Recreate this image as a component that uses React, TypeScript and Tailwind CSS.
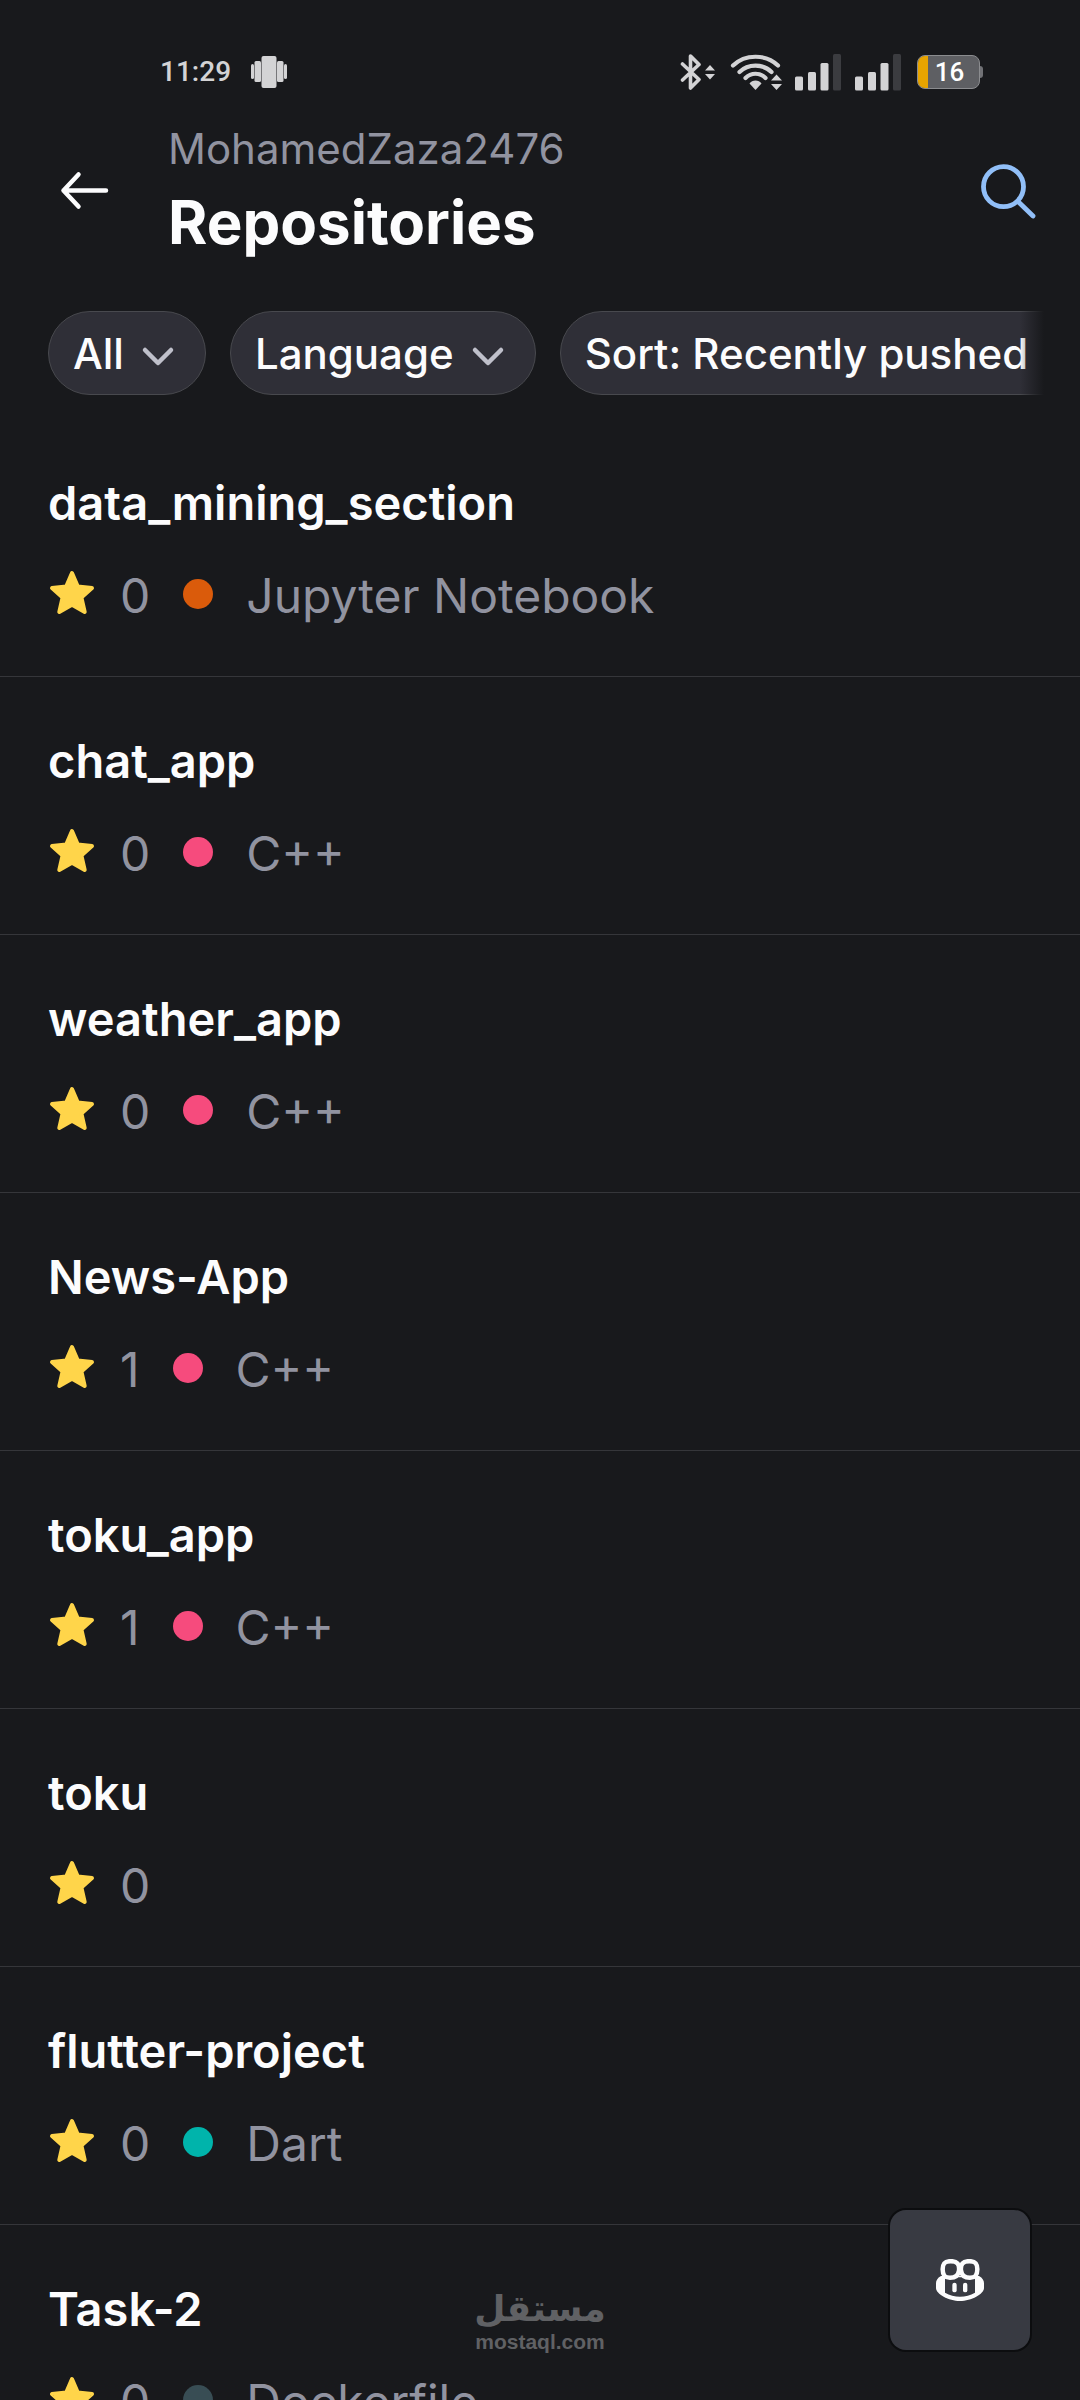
import React from 'react';

interface Repository {
    name: string;
    stars: number;
    language?: string;
    color?: string;
}

const repositories: Repository[] = [
    { name: 'data_mining_section', stars: 0, language: 'Jupyter Notebook', color: 'bg-[#da5b0b]' },
    { name: 'chat_app', stars: 0, language: 'C++', color: 'bg-[#f64b7d]' },
    { name: 'weather_app', stars: 0, language: 'C++', color: 'bg-[#f64b7d]' },
    { name: 'News-App', stars: 1, language: 'C++', color: 'bg-[#f64b7d]' },
    { name: 'toku_app', stars: 1, language: 'C++', color: 'bg-[#f64b7d]' },
    { name: 'toku', stars: 0 },
    { name: 'flutter-project', stars: 0, language: 'Dart', color: 'bg-[#00b4ab]' },
    { name: 'Task-2', stars: 0, language: 'Dockerfile', color: 'bg-[#384d54]' },
];

export default function App() {
    return (
        <div className="relative flex h-screen flex-col overflow-hidden bg-[#18191c] font-['Inter',sans-serif] text-[#fcfcfd]">
            <StatusBar />
            <Header owner="MohamedZaza2476" title="Repositories" />
            <Filters />
            <main className="min-h-0 flex-1 overflow-hidden">
                <ul>
                    {repositories.map((repository) => (
                        <RepositoryRow key={repository.name} repository={repository} />
                    ))}
                </ul>
            </main>
            <Watermark />
            <button
                type="button"
                aria-label="Copilot"
                className="absolute right-[50px] bottom-[50px] flex size-[140px] items-center justify-center rounded-2xl bg-[#383a42] shadow-[0_0_0_2px_#0c0d0f]"
            >
                <CopilotIcon />
            </button>
        </div>
    );
}

/**
 * The system bar with the clock, the connections and the battery
 */
function StatusBar() {
    return (
        <div className="flex h-[124px] shrink-0 items-center justify-between pt-5 pr-[97px] pl-40 text-[#d3d3d5]">
            <div className="flex items-center gap-5">
                <span className="font-['Roboto',sans-serif] text-[28px] leading-10 font-medium">11:29</span>
                <VibrateIcon />
            </div>
            <div className="flex items-center">
                <BluetoothIcon />
                <WifiIcon />
                <SignalIcon />
                <SignalIcon />
                <Battery level="16" />
            </div>
        </div>
    );
}

function Header(props: { owner: string; title: string }) {
    const { owner, title } = props;
    return (
        <header className="flex shrink-0 items-center pr-10 pl-[52px]">
            <a href="#back" aria-label="Back" className="mr-[52px] shrink-0">
                <svg viewBox="0 0 64 64" className="size-16" fill="none" stroke="currentColor" strokeWidth="4.5" strokeLinecap="round" strokeLinejoin="round">
                    <path d="M54 31.500H11.500M26.500 15.500L11.500 31.500L26.500 47.500" />
                </svg>
            </a>
            <div className="flex min-w-0 flex-1 flex-col gap-3">
                <p className="truncate text-[42px] leading-[50px] text-[#9193a0]">{owner}</p>
                <h1 className="truncate text-6xl leading-[72px] font-bold">{title}</h1>
            </div>
            <button type="button" aria-label="Search" className="shrink-0 text-[#91bff8]">
                <svg viewBox="0 0 64 64" className="size-16" fill="none" stroke="currentColor" strokeWidth="4.800" strokeLinecap="round">
                    <circle cx="27.500" cy="27.700" r="20" />
                    <path d="M42 42.500L57 57" />
                </svg>
            </button>
        </header>
    );
}

function Filters() {
    return (
        <nav aria-label="Filters" className="relative mt-[53px] mr-9 shrink-0 overflow-hidden pb-6 pl-12">
            <div className="flex gap-6">
                <FilterChip label="All" />
                <FilterChip label="Language" />
                <FilterChip label="Sort: Recently pushed" />
            </div>
            {/* Fades out the chips that run past the edge */}
            <div className="absolute inset-y-0 right-0 w-6 bg-linear-to-r from-transparent to-[#18191c]" />
        </nav>
    );
}

function FilterChip(props: { label: string }) {
    return (
        <button
            type="button"
            className="flex h-[84px] shrink-0 items-center gap-[6px] rounded-full border border-[#48494e] bg-[#2f2f37] pt-0.5 pr-[19px] pl-6 text-[42px] leading-[50px] font-medium"
        >
            {props.label}
            <svg viewBox="0 0 56 56" className="size-14 text-[#bfc0ca]" fill="none" stroke="currentColor" strokeWidth="4.500" strokeLinecap="round" strokeLinejoin="round">
                <path d="M15 24L28 37L41 24" />
            </svg>
        </button>
    );
}

function RepositoryRow(props: { repository: Repository }) {
    const { name, stars, language, color } = props.repository;
    return (
        <li className="h-[258px] border-b border-[#35363a] px-12 pt-[55px]">
            <a href={`#${name}`} className="flex flex-col gap-[34px]">
                <h2 className="text-[47px] leading-[58px] font-semibold">{name}</h2>
                <div className="flex items-start text-5xl leading-[60px] text-[#9193a0]">
                    <StarIcon />
                    <span className="ml-6">{stars}</span>
                    {language ? (
                        <>
                            <span className={`mt-[13px] ml-[33px] size-[30px] rounded-full ${color}`} />
                            <span className="ml-[33px]">{language}</span>
                        </>
                    ) : null}
                </div>
            </a>
        </li>
    );
}

function StarIcon() {
    return (
        <svg viewBox="0 0 48 48" className="mt-1 size-12 text-[#ffd54a]" fill="currentColor" stroke="currentColor" strokeWidth="4" strokeLinejoin="round">
            <path d="M24 3L29.700 16.400L44 18L33.400 27.400L36.700 42L24 34.700L11.300 42L14.600 27.400L4 18L18.300 16.400Z" />
        </svg>
    );
}

function CopilotIcon() {
    return (
        <svg viewBox="198 207 144 126" className="h-[42px] w-12" fill="currentColor">
            <path
                fillRule="evenodd"
                d="M213 258C202 264 198 272 198 280V294C198 312 236 333 270 333C304 333 342 312 342 294V280C342 272 338 264 327 258ZM225 262V308Q246 320 270 320Q294 320 315 308V262Z"
            />
            <g fill="#383a42" stroke="currentColor" strokeWidth="13.500">
                <path d="M242 213.500C225 213.500 218 219 218 238C218 257 225 263.500 240 263.500C256 263.500 265 256 267 242C269 222 262 213.500 242 213.500Z" />
                <path d="M298 213.500C315 213.500 322 219 322 238C322 257 315 263.500 300 263.500C284 263.500 275 256 273 242C271 222 278 213.500 298 213.500Z" />
            </g>
            <rect x="247" y="278" width="13" height="29" rx="6.500" />
            <rect x="279" y="278" width="13" height="29" rx="6.500" />
        </svg>
    );
}

function VibrateIcon() {
    return (
        <svg viewBox="0 0 36 32" className="h-8 w-9" fill="currentColor">
            <rect x="0" y="8" width="3" height="15" rx="1.500" />
            <rect x="33" y="8" width="3" height="15" rx="1.500" />
            <rect x="3.500" y="5" width="6.500" height="21" rx="1.500" />
            <rect x="26" y="5" width="6.500" height="21" rx="1.500" />
            <rect x="10.500" y="0" width="15" height="32" rx="2" />
        </svg>
    );
}

function BluetoothIcon() {
    return (
        <svg viewBox="0 0 36 38" className="mr-[14px] h-[38px] w-9" fill="none" stroke="currentColor" strokeWidth="3.600" strokeLinecap="round" strokeLinejoin="round">
            <path d="M2.500 11L19 26.500L10.500 35V3L19 11.500L2.500 27" />
            <path d="M25 17.500L30 12L35 17.500ZM25 21L30 26.500L35 21Z" fill="currentColor" stroke="none" />
        </svg>
    );
}

function WifiIcon() {
    return (
        <svg viewBox="0 0 52 38" className="mr-[13px] h-[38px] w-[52px]" fill="none" stroke="currentColor" strokeWidth="4.200" strokeLinecap="round">
            <path d="M3 12.500C15 0.800 36 0.800 48 12.500M9.500 19C18 10.500 33 10.500 41.500 19M15.500 25C21 19.300 30 19.300 35.500 25" />
            <path d="M25.500 37L19.500 30.500C22 26.500 29 26.500 31.500 30.500Z" fill="currentColor" stroke="none" />
            <path d="M41 27.500L46.500 21.500L52 27.500ZM41 31L46.500 37L52 31Z" fill="currentColor" stroke="none" />
        </svg>
    );
}

function SignalIcon() {
    return (
        <svg viewBox="0 0 46 38" className="mr-[14px] h-[38px] w-[46px]" fill="currentColor">
            <rect x="0" y="23.500" width="8" height="14" rx="1.500" />
            <rect x="13" y="19" width="8" height="18.500" rx="1.500" />
            <rect x="25.500" y="10" width="8" height="27.500" rx="1.500" />
            <rect x="38" y="1" width="8" height="36.500" rx="1.500" className="text-[#3b3c40]" />
        </svg>
    );
}

function Battery(props: { level: string }) {
    return (
        <div className="ml-0.5 flex items-center">
            <div className="flex h-[34px] w-[63px] overflow-hidden rounded-lg border border-[#8b8c8f] bg-[#5e5f63]">
                <span className="w-[10px] bg-[#e7a400]" />
                <span className="flex-1 pr-2 text-center font-['Roboto',sans-serif] text-[26px] leading-8 font-medium text-white">
                    {props.level}
                </span>
            </div>
            <span className="h-3 w-[3px] rounded-r-sm bg-[#707175]" />
        </div>
    );
}

function Watermark() {
    return (
        <div className="absolute bottom-[46px] left-1/2 flex -translate-x-1/2 flex-col items-center font-bold text-[#606164]">
            <span dir="rtl" lang="ar" className="font-['DejaVu_Sans',sans-serif] text-[36px] leading-[42px]">
                مستقل
            </span>
            <span className="font-['Liberation_Sans',sans-serif] text-[21px] leading-6">mostaql.com</span>
        </div>
    );
}
